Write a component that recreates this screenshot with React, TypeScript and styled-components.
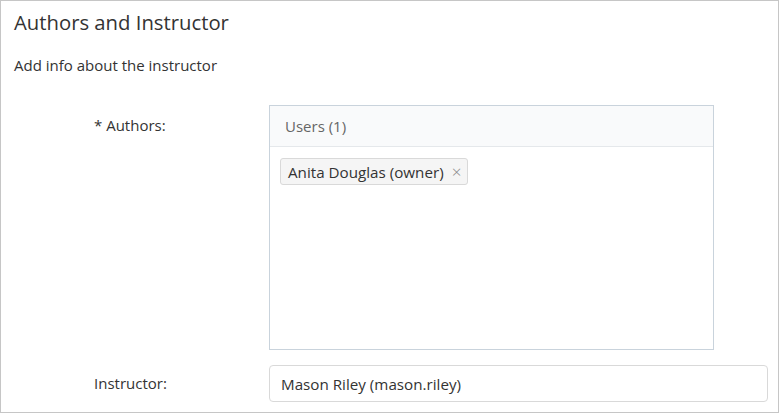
import React from "react";
import styled, { createGlobalStyle } from "styled-components";

const Global = createGlobalStyle`
  html, body { margin: 0; padding: 0; background: #fff; }
  body { font-family: "Open Sans", "Noto Sans", sans-serif; color: #333; }
  * { box-sizing: border-box; }
`;

const Panel = styled.section`
  width: 779px;
  height: 413px;
  border: 1px solid #c6c6c6;
  padding: 8px 10px 10px 13px;
  display: flex;
  flex-direction: column;
`;

const Title = styled.h2`
  margin: 0;
  font-size: 20.3px;
  line-height: 27px;
  font-weight: 400;
  color: #333;
`;

const Description = styled.p`
  margin: 19px 0 0;
  font-size: 15px;
  line-height: 20px;
  color: #333;
`;

const FormRow = styled.div<{ $top: number }>`
  display: grid;
  grid-template-columns: 175px 1fr;
  padding-left: 80px;
  margin-top: ${(p) => p.$top}px;
`;

const Label = styled.label<{ $pt: number }>`
  font-size: 15px;
  line-height: 20px;
  color: #333;
  padding-top: ${(p) => p.$pt}px;
`;

const UsersBox = styled.div`
  width: 445px;
  height: 245px;
  border: 1px solid #c9d3dc;
  display: flex;
  flex-direction: column;
`;

const UsersHeader = styled.div`
  height: 41px;
  background: #f9fafb;
  border-bottom: 1px solid #e5e8eb;
  padding: 10px 15px 0;
  font-size: 15px;
  line-height: 20px;
  color: #666;
`;

const TagList = styled.div`
  display: flex;
  flex-wrap: wrap;
  padding: 11px 10px;
  gap: 6px;
`;

const Tag = styled.span`
  display: inline-flex;
  align-items: center;
  height: 27px;
  padding: 0 6px 0 7px;
  background: #f5f5f5;
  border: 1px solid #d9d9d9;
  border-radius: 3px;
  font-size: 15.2px;
  color: #333;
`;

const Remove = styled.span`
  margin-left: 8px;
  font-size: 17px;
  font-weight: 300;
  color: #888;
  line-height: 1;
`;

const Input = styled.div`
  height: 37px;
  border: 1px solid #d9d9d9;
  border-radius: 4px;
  padding: 0 11px;
  display: flex;
  align-items: center;
  font-size: 15.2px;
  color: #333;
`;

export default function App() {
  return (
    <>
      <Global />
      <Panel>
        <Title>Authors and Instructor</Title>
        <Description>Add info about the instructor</Description>
        <FormRow $top={30}>
          <Label $pt={10}>* Authors:</Label>
          <UsersBox>
            <UsersHeader>Users (1)</UsersHeader>
            <TagList>
              <Tag>
                Anita Douglas (owner)
                <Remove>×</Remove>
              </Tag>
            </TagList>
          </UsersBox>
        </FormRow>
        <FormRow $top={15}>
          <Label $pt={8}>Instructor:</Label>
          <Input>Mason Riley (mason.riley)</Input>
        </FormRow>
      </Panel>
    </>
  );
}
